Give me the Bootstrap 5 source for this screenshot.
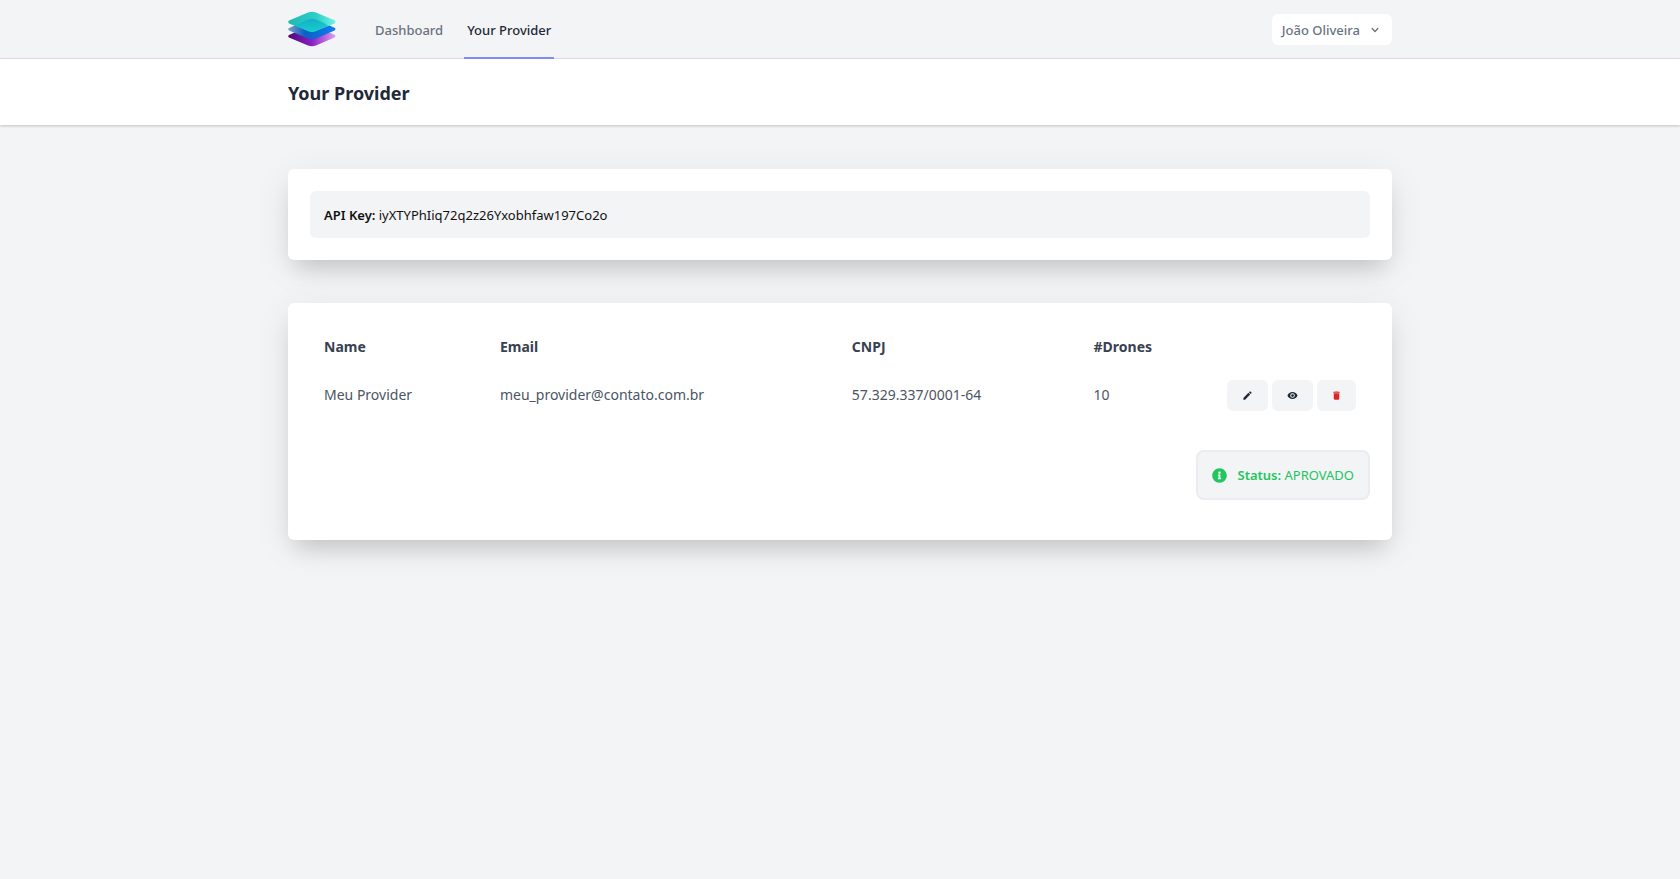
<!DOCTYPE html>
<html lang="en">
<head>
<meta charset="utf-8">
<meta name="viewport" content="width=device-width, initial-scale=1">
<title>Your Provider</title>
<link href="https://cdn.jsdelivr.net/npm/bootstrap@5.3.0/dist/css/bootstrap.min.css" rel="stylesheet">
<style>
  body { background: #f3f4f6; color: #111; font-family: "Noto Sans", "Open Sans", sans-serif; font-size: 14px; line-height: 24px; }
  .page-wrap { width: 100%; max-width: 1152px; margin: 0 auto; padding: 0 24px; }
  .topbar { border-bottom: 1px solid #e0e1e4; }
  .topbar .page-wrap { height: 58px; }
  .tab-link { font-size: 13px; line-height: 20px; font-weight: 500; color: #6b7280; padding: 20px 3px 17px; border-bottom: 2px solid transparent; margin-bottom: -1px; text-decoration: none; }
  .tab-link.active { color: #1f2937; border-color: #818cf8; }
  .tab-list { gap: 18px; margin-left: 36px; }
  .user-btn { background: #fff; color: #6b7280; font-size: 13px; line-height: 20px; font-weight: 500; padding: 6px 10px 5px; border: 0; border-radius: 6px; gap: 8px; }
  .user-btn:hover { background: #fff; color: #374151; }
  .page-head { background: #fff; padding: 22px 0 20px; box-shadow: 0 1px 3px rgba(0,0,0,.14), 0 1px 2px rgba(0,0,0,.08); }
  .page-head h1 { font-size: 18px; line-height: 24px; font-weight: 700; color: #1f2937; }
  .panel { background: #fff; border-radius: 6px; padding: 22px; box-shadow: 0 8px 36px rgba(0,0,0,.08), 0 14px 22px -8px rgba(0,0,0,.16); }
  .stack { padding: 44px 0; gap: 43px; }
  .key-box { background: #f3f4f6; border-radius: 6px; padding: 12px 14px 11px; font-size: 13px; line-height: 24px; }
  .provider-table { table-layout: fixed; width: 100%; }
  .provider-table th { color: #374151; font-weight: 700; padding: 10px 14px; }
  .provider-table td { color: #4b5563; padding: 10px 14px; height: 52px; vertical-align: middle; }
  .w-name { width: 16.6%; } .w-mail { width: 33.2%; } .w-cnpj { width: 22.8%; } .w-num { width: 12%; }
  .tool-btn { background: #f3f4f6; border: 0; border-radius: 6px; height: 31px; padding: 0 15px; display: flex; align-items: center; justify-content: center; }
  .tool-btn + .tool-btn:last-child { padding: 0 14px; }
  .status-row { padding: 29px 0 18px; }
  .status-box { background: #f3f4f6; border: 2px solid #ebecef; border-radius: 8px; color: #22c55e; font-size: 13px; line-height: 20px; padding: 13px 14px; gap: 10px; }
  .key-box strong, .status-box strong { font-weight: 600; }
</style>
</head>
<body>
<nav class="topbar">
  <div class="page-wrap d-flex align-items-center justify-content-between">
    <div class="d-flex align-items-center">
      <a href="#" aria-label="Home" class="d-block lh-1">
        <svg width="48" height="36" viewBox="0 0 48 36" class="d-block">
          <defs>
            <linearGradient id="gp"><stop offset="0" stop-color="#4d0a78"/><stop offset=".5" stop-color="#8b1fc4"/><stop offset="1" stop-color="#dda0f2"/></linearGradient>
            <linearGradient id="gb"><stop offset="0" stop-color="#7f9fc6"/><stop offset=".35" stop-color="#0b5fc4"/><stop offset="1" stop-color="#0f7df0"/></linearGradient>
            <linearGradient id="gt"><stop offset="0" stop-color="#22b8b4"/><stop offset=".6" stop-color="#2ccfc8"/><stop offset="1" stop-color="#6ff5e4"/></linearGradient>
            <linearGradient id="gm" x2="0" y2="1"><stop offset="0" stop-color="#12aac8"/><stop offset="1" stop-color="#0fd0cf"/></linearGradient>
          </defs>
          <path d="M1 24 20 15.500Q24 14 28 15.500L47 24Q48 25.500 46.500 26.500L28 34.500Q24 36 20 34.500L1 26.500Q-.5 25 1 24Z" fill="url(#gp)"/>
          <path d="M1 17 20 8.500Q24 7 28 8.500L47 17Q48 18.500 46.500 19.500L28 27.500Q24 29 20 27.500L1 19.500Q-.5 18 1 17Z" fill="url(#gb)"/>
          <path d="M1 9.500 20 1.500Q24 0 28 1.500L47 9.500Q48 11 46.500 12.500L28 20Q24 22 20 20L1 12.500Q-.5 11 1 9.500Z" fill="url(#gt)"/>
          <path d="M11 12.500 20 8.500Q24 7 28 8.500L37 12.500 40 15 28 20Q24 22 20 20L8 15Z" fill="url(#gm)" fill-opacity=".85"/>
        </svg>
      </a>
      <div class="tab-list d-flex align-self-stretch">
        <a class="tab-link" href="#">Dashboard</a>
        <a class="tab-link active" href="#" aria-current="page">Your Provider</a>
      </div>
    </div>
    <button type="button" class="user-btn btn d-flex align-items-center">João Oliveira
      <svg width="14" height="14" viewBox="0 0 20 20" fill="currentColor"><path fill-rule="evenodd" d="M5.293 7.293a1 1 0 011.414 0L10 10.586l3.293-3.293a1 1 0 111.414 1.414l-4 4a1 1 0 01-1.414 0l-4-4a1 1 0 010-1.414z"/></svg>
    </button>
  </div>
</nav>
<header class="page-head"><div class="page-wrap"><h1 class="mb-0">Your Provider</h1></div></header>
<main class="page-wrap">
  <div class="stack d-flex flex-column">
    <section class="panel"><div class="key-box"><strong>API Key:</strong> iyXTYPhIiq72q2z26Yxobhfaw197Co2o</div></section>
    <section class="panel">
      <table class="provider-table">
        <colgroup><col class="w-name"><col class="w-mail"><col class="w-cnpj"><col class="w-num"><col></colgroup>
        <thead><tr><th>Name</th><th>Email</th><th>CNPJ</th><th>#Drones</th><th></th></tr></thead>
        <tbody><tr>
          <td>Meu Provider</td><td>meu_provider@contato.com.br</td><td>57.329.337/0001-64</td><td>10</td>
          <td><div class="d-flex justify-content-end gap-1">
            <button type="button" class="tool-btn" aria-label="Edit"><svg width="11" height="11" viewBox="0 0 24 24" fill="#1f2937"><path d="M3 17.250V21h3.750L17.810 9.940l-3.750-3.750L3 17.250zM20.710 7.040a1 1 0 0 0 0-1.410l-2.340-2.340a1 1 0 0 0-1.410 0l-1.830 1.830 3.750 3.750 1.830-1.830z"/></svg></button>
            <button type="button" class="tool-btn" aria-label="View"><svg width="11" height="11" viewBox="0 0 24 24" fill="#1f2937"><path d="M12 4.500C7 4.500 2.730 7.610 1 12c1.730 4.390 6 7.500 11 7.500s9.270-3.110 11-7.500c-1.730-4.390-6-7.500-11-7.500zM12 17a5 5 0 1 1 0-10 5 5 0 0 1 0 10zm0-8a3 3 0 1 0 0 6 3 3 0 0 0 0-6z"/></svg></button>
            <button type="button" class="tool-btn" aria-label="Delete"><svg width="11" height="11" viewBox="0 0 24 24" fill="#dc2626"><path d="M6 19c0 1.100.9 2 2 2h8c1.100 0 2-.9 2-2V7H6v12zM19 4h-3.500l-1-1h-5l-1 1H5v2h14V4z"/></svg></button>
          </div></td>
        </tr></tbody>
      </table>
      <div class="status-row d-flex justify-content-end">
        <div class="status-box d-flex align-items-center">
          <svg width="15" height="15" viewBox="0 0 512 512" fill="currentColor"><path d="M256 8C119.043 8 8 119.083 8 256c0 136.997 111.043 248 248 248s248-111.003 248-248C504 119.083 392.957 8 256 8zm0 110c23.196 0 42 18.804 42 42s-18.804 42-42 42-42-18.804-42-42 18.804-42 42-42zm56 254c0 6.627-5.373 12-12 12h-88c-6.627 0-12-5.373-12-12v-24c0-6.627 5.373-12 12-12h12v-64h-12c-6.627 0-12-5.373-12-12v-24c0-6.627 5.373-12 12-12h64c6.627 0 12 5.373 12 12v100h12c6.627 0 12 5.373 12 12v24z"/></svg>
          <span><strong>Status:</strong> APROVADO</span>
        </div>
      </div>
    </section>
  </div>
</main>
<script src="https://cdn.jsdelivr.net/npm/bootstrap@5.3.0/dist/js/bootstrap.bundle.min.js"></script>
</body>
</html>
